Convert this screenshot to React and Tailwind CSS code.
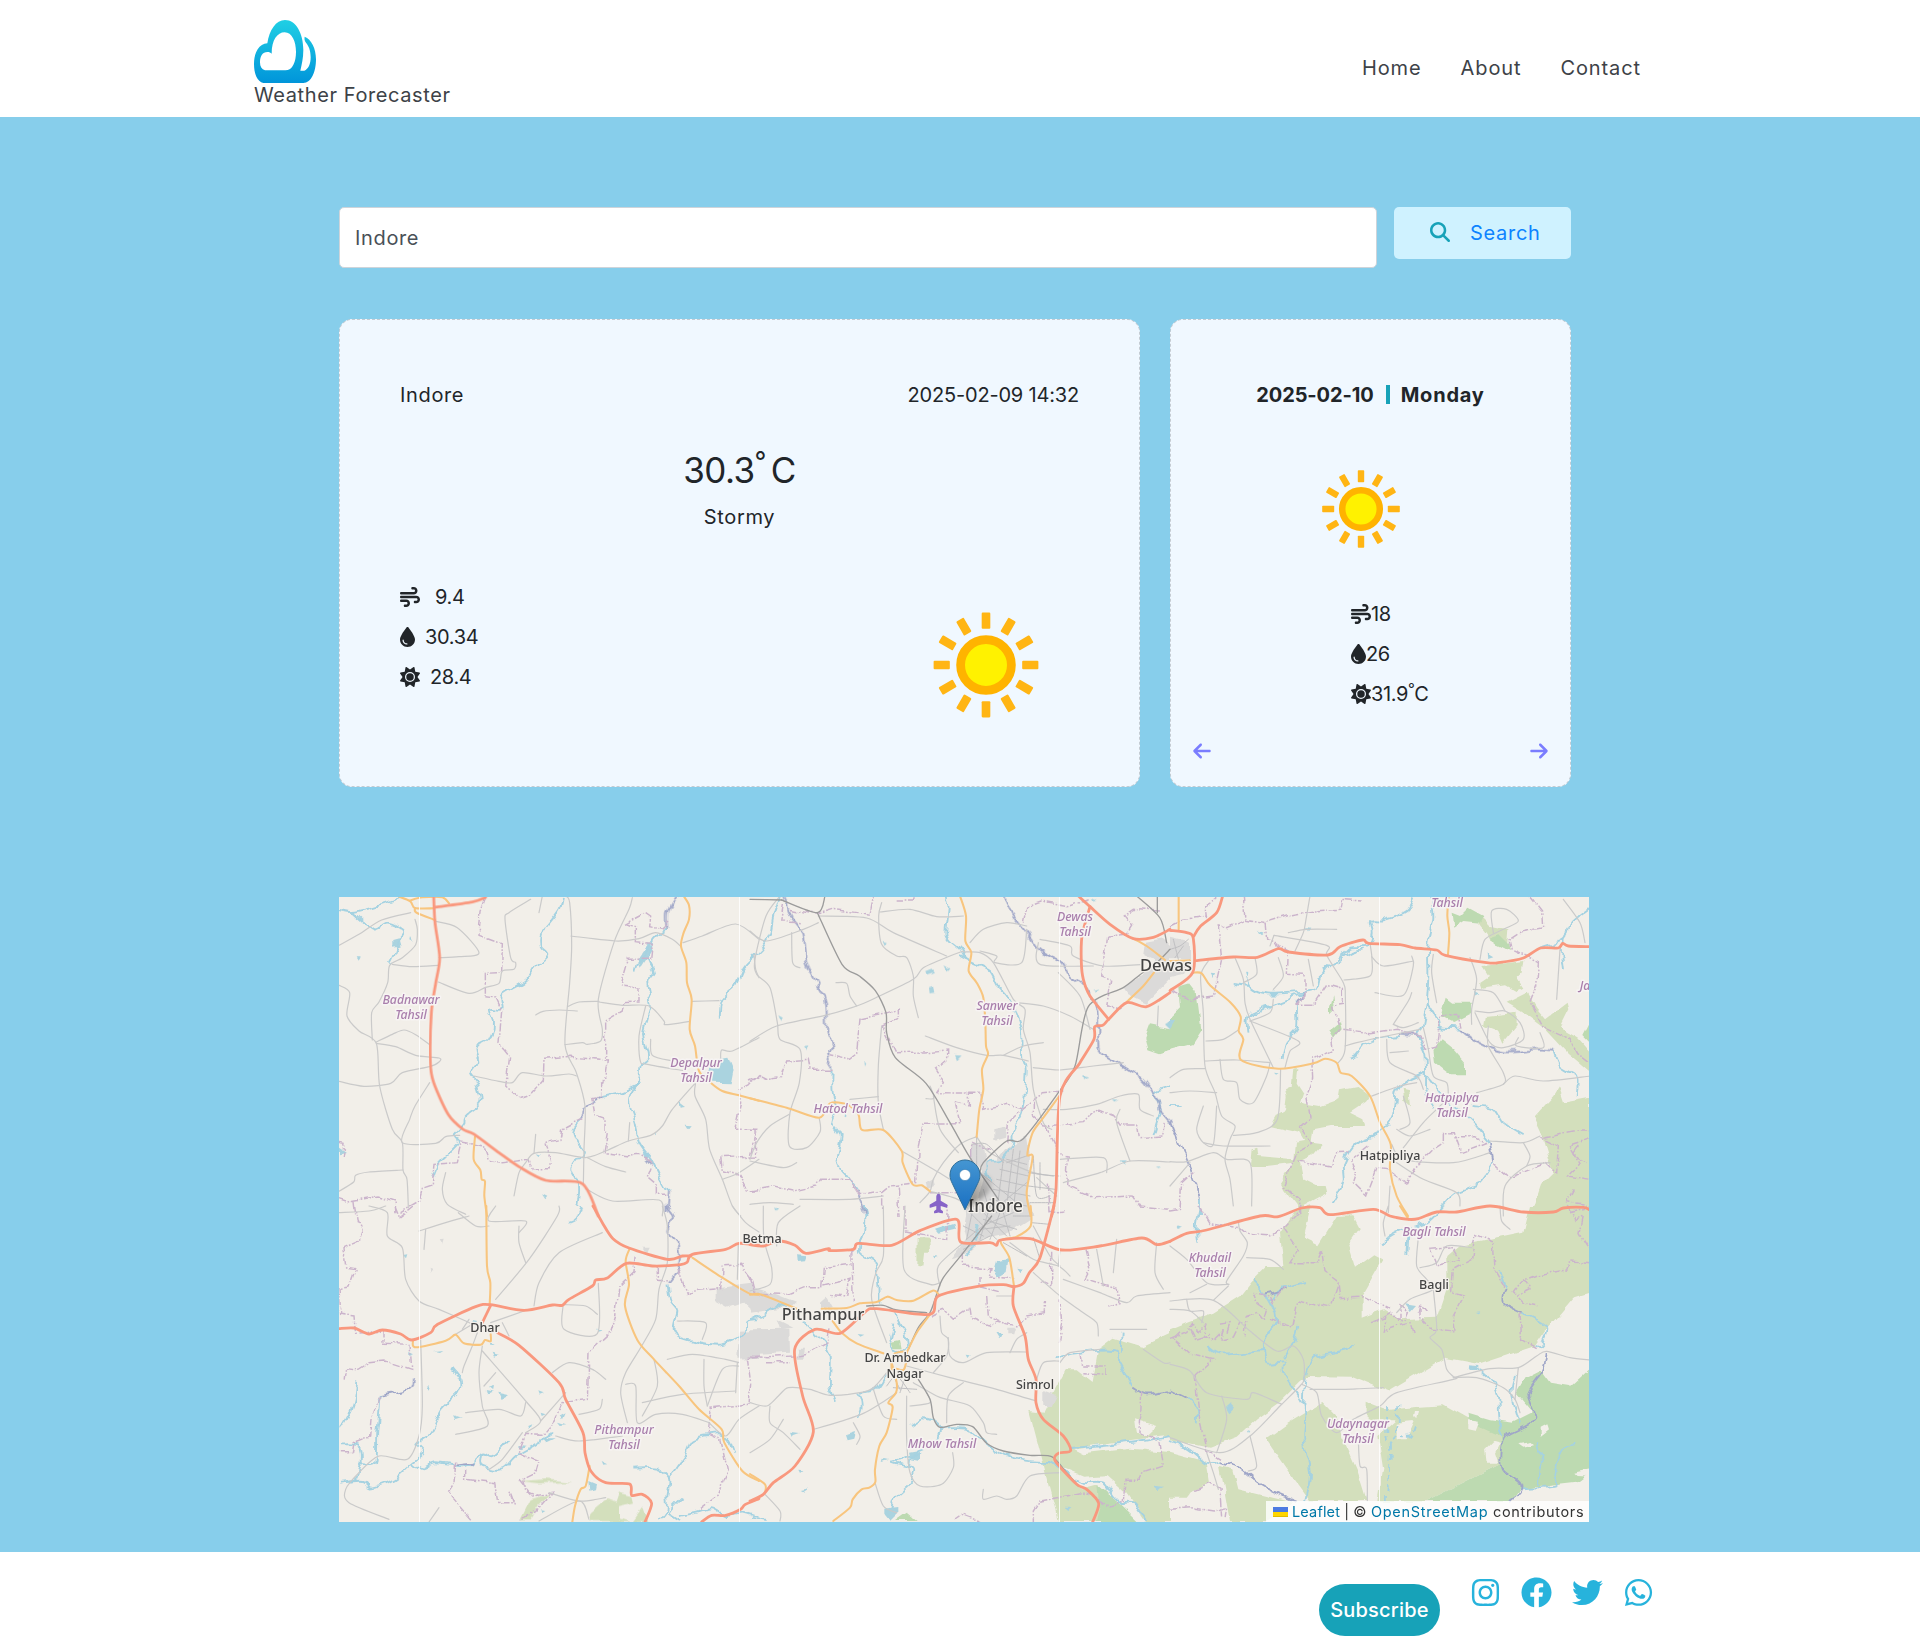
import React from "react";
import { FaInstagram, FaFacebook, FaTwitter, FaWhatsapp, FaPlane } from "react-icons/fa";
import { FaWind, FaDroplet, FaSun, FaMagnifyingGlass, FaArrowLeft, FaArrowRight } from "react-icons/fa6";

/* Map sections: each is drawn on its own 3x grid and placed at (x, y). */
const SECTIONS = [
  {
    x: 0, y: -1,
    red: ["M284 0 288 80 302 185 290 262 277 350 274 500 284 560 328 656 372 700 404 714 480 770 540 812 620 853 730 863 778 960", "M286 34 400 18 440 4"],
    orange: ["M176 0 214 16 228 36 284 37", "M228 36 232 50 288 72", "M212 14 250 4 310 4 330 22", "M1034 0 1050 28 1050 70 1034 110 1026 150 1042 200 1044 260 1058 310 1052 400 1068 450 1080 525 1115 560 1150 585 1200 598 1260 614", "M408 722 404 790 424 822 428 850 438 856 436 900 444 960"],
    road: ["M0 148 60 115 128 72 215 50", "M228 70 235 100 230 146 190 185 152 208 146 260 120 318 98 350 100 432", "M160 205 220 212 298 208", "M0 268 32 290 24 360 60 405 112 442 122 570 160 700 190 740 192 822 204 850 208 935", "M112 438 160 415 195 402 230 416 272 446", "M112 442 170 452 230 478 300 486 300 498 272 512 190 530 155 562 75 571 0 556", "M272 560 228 630 212 670 190 740 290 742 320 722 362 718", "M0 886 44 858 50 838 90 828 192 822", "M300 185 360 182 420 170 355 95 290 76", "M680 0 692 20 698 150 692 260 678 446 712 530 738 630 735 760 733 865", "M678 446 730 440 745 445 785 435 790 400 778 310 826 136 870 40 880 5", "M696 120 830 135 900 128 950 110 1000 130 1026 152", "M590 357 612 346 660 342 715 345", "M686 332 720 318 780 316", "M780 318 850 328 930 330 975 375 980 386 1052 376", "M1032 140 1090 120 1190 84 1260 130", "M1060 316 1140 314", "M298 258 390 292 440 274 480 262 490 225 525 220 530 200 515 185 498 70 510 50 575 10", "M404 540 480 556 520 560 550 530 620 540 690 534 712 540", "M1260 425 1180 465 1148 462 1145 490", "M1070 560 1068 600 1100 670 1112 760 1150 850 1180 930 1205 960", "M1068 562 1000 640 970 690 935 718 868 735 800 765 740 785 650 770 585 772 560 800 540 830 525 900", "M745 785 800 812 860 828", "M740 878 820 915 960 912 970 960", "M920 330 900 420 904 495 925 505 1040 525", "M935 430 940 478 1000 495", "M1150 850 1200 830 1260 790", "M868 735 872 680", "M585 772 590 715", "M1245 175 1250 220 1260 245", "M320 830 310 880 325 925 380 955", "M600 50 610 0"],
    river: ["M0 42 40 48 100 35 170 12 190 0", "M40 48 105 100 145 80 198 110 180 140 165 180 155 200", "M672 0 660 42 610 110 605 150 625 175 590 210 560 255 490 300 490 340 450 340 462 380 450 430 410 455 418 495 395 530 412 560 424 620 380 660 375 690 350 720 355 745 300 800 282 840", "M985 95 945 130 930 190 945 228 925 260 935 330 915 410 930 480 905 510 900 550 870 610 890 680 900 740 935 790 960 840 990 890", "M905 560 850 585 790 600", "M730 665 700 700 715 740 735 770 700 820 720 870 715 930", "M945 130 900 190 885 230", "M1250 180 1215 215 1190 270 1150 310 1142 365"],
    dusk: ["M1012 0 985 50 985 95", "M790 600 740 630 730 665", "M990 890 985 945", "M925 790 940 810"],
    admin: ["M440 0 426 40 420 115 490 140 488 230 436 232 436 302 470 306 488 345 480 440 512 480 500 570 540 606 570 596 610 550 612 490 700 484 808 492 800 550 785 560 785 600 755 605 765 660 795 670 795 705 808 710 798 770 870 780 905 778 940 805 925 845 955 870 955 895 985 895", "M855 85 920 50 935 60 932 92 965 100 990 75", "M860 85 892 92 892 140 940 145 935 190 868 190 845 270 900 276 900 318 855 320 850 345 800 375 800 490", "M730 665 665 700 660 730 620 740 635 800 630 818 580 818 570 790 490 800 445 792 430 750 370 738 355 800 285 805 280 870 250 880 240 915 180 950", "M0 905 30 915 120 900 165 915 168 955", "M1260 535 1230 570 1200 585 1205 620 1188 700 1248 700 1250 780 1145 785 1150 820 1200 835 1225 885 1260 885", "M45 915 50 955", "M0 742 15 745 10 780"],
    water: ["M1120 490 1165 482 1180 520 1172 562 1120 560 1105 530Z", "M163 135 182 130 188 152 163 155Z", "M895 190 930 140 940 160 905 215Z", "M1018 615 1038 630 1022 632Z", "M1040 686 1058 688 1048 700Z", "M612 895 628 902 622 910Z", "M350 728 362 730 355 745Z", "M50 184 62 184 56 194Z", "M210 120 218 135 208 130Z", "M945 706 955 712 946 718Z", "M0 755 18 768 0 772Z", "M590 778 606 782 598 786Z"],
  },
  {
    x: 411, y: -1,
    red: ["M985 0 1020 32 1080 85 1150 128 1210 124 1260 100", "M1020 32 996 120 994 200 1000 250 1020 300 1076 370", "M1260 290 1190 332 1130 320 1076 370 1058 388 1034 392 1032 430 990 500 930 600 918 880 905 960"],
    orange: ["M630 0 648 60 646 135 664 170 656 225 680 260 700 305 706 380 708 450 714 475 696 520 700 580 688 640 680 722", "M0 607 110 635 208 665 240 622 290 625 325 655 336 702 400 702 455 765 458 800 488 865 515 868 540 886", "M928 600 880 665 848 710 832 776 848 782 830 890 842 960", "M1150 128 1190 150 1245 192", "M1130 318 1180 270 1212 230"],
    rail: ["M0 10 95 12", "M95 12 202 50 225 0", "M202 50 276 205 328 240 376 284 408 350 410 410 436 485 528 562 600 680 660 785 745 910", "M1260 160 1220 200 1170 236 1120 275 1015 332 975 510 925 590 820 728 770 735 700 800 690 830", "M1160 0 1230 66 1250 140", "M1222 0 1222 50"],
    road: ["M205 60 350 66 430 110 590 180", "M0 105 50 135 160 100 205 80", "M90 0 48 60 15 190 20 235 60 275 82 380 90 430 150 460 148 560 120 650 118 750 170 755 210 708 208 668", "M0 436 80 390 225 358 320 330 376 306 490 250 520 215 600 180 640 165", "M395 20 386 60 395 145 440 180 470 185 490 240 490 300 505 365", "M390 48 480 40 560 62 640 60", "M660 140 700 100 770 80 830 90", "M640 168 690 170 730 200 790 310 825 340 820 400 840 470 850 580 880 680 905 700", "M526 420 620 455 710 478 760 478 835 495", "M760 478 820 450 880 440", "M850 515 930 522 1030 510 1120 500", "M880 640 950 640 1040 625 1110 600 1165 595 1170 640 1210 660", "M680 722 630 745 580 800 550 850 540 886 510 920", "M680 722 720 770 850 830 930 840", "M395 390 385 510 385 620 400 700", "M300 610 385 602", "M865 140 870 205 1030 210", "M870 130 960 150 970 180 1060 210 1180 205", "M550 600 570 700 625 770", "M455 765 550 820 600 850", "M0 795 100 815 140 800", "M0 925 60 920 130 925", "M150 910 300 910 400 900", "M940 860 1050 830 1140 795 1260 798", "M800 320 880 330 960 360 1030 400", "M528 608 552 606 540 570", "M258 260 290 262 300 300 320 330", "M125 110 128 200 150 215", "M690 165 740 180 735 200 815 200 830 100", "M118 655 60 690 20 740 0 790", "M1225 330 1222 390", "M925 230 990 300 1020 400", "M540 886 610 905 650 925", "M1140 795 1100 680 1110 640", "M930 790 1060 785 1070 830", "M860 845 920 900"],
    street: ["M740 850 830 870", "M750 820 835 840", "M770 790 830 805", "M790 760 770 930", "M810 765 790 940", "M760 790 740 950", "M730 880 840 900", "M720 910 830 930", "M700 880 720 950", "M770 800 830 780", "M690 830 800 920", "M745 930 830 860", "M665 745 710 745 760 800", "M680 725 680 830", "M835 830 910 840", "M835 870 915 880", "M850 780 860 900 900 900", "M870 800 870 880", "M840 920 910 920"],
    river: ["M590 0 596 40 590 120 630 160 650 190 720 225 745 270 770 300 800 350 815 400 820 480 830 520 818 640 790 700 785 750 755 790 710 800 720 860", "M90 0 70 60 60 110 30 160 0 190", "M245 520 245 590 262 640 250 680 272 720 260 800 290 840 320 880", "M345 940 350 960", "M1260 570 1210 590 1230 640 1210 720", "M650 190 630 180", "M265 640 285 665"],
    dusk: ["M100 0 120 60 155 110 170 200 205 270 228 320 232 400 250 450 230 490 245 520", "M760 0 790 60 830 110 870 165 930 195 960 240 1000 270 1040 340 1045 400 1050 465 1120 510 1180 550 1215 600 1235 650 1260 682", "M320 880 345 950"],
    admin: ["M100 30 92 78 150 80", "M120 40 200 55 250 40 360 55 370 0", "M440 15 490 15 495 0", "M820 80 830 30 870 15 960 30 1020 10", "M435 470 520 468 590 462 590 490 555 520 580 560 560 590 690 592 695 640 770 625 815 635", "M330 365 410 350 445 340 445 370 400 390 405 410 435 470", "M330 365 320 470 300 485 235 470", "M245 520 180 520 175 490 110 495 95 545 50 550 30 540 0 555", "M615 620 630 680 520 682 505 750 500 860 420 870 395 890 395 940", "M615 620 655 630 655 592", "M0 885 70 872 130 885 200 870 215 850 300 850 320 880", "M1070 120 1130 115 1145 90 1120 60 1150 40 1230 45", "M1070 120 1055 240 1085 250 1070 330 1115 335", "M815 640 880 590 940 585", "M850 620 850 660 885 690 1000 680 1040 640 1090 660 1110 690 1160 690 1165 725 1235 720 1240 680", "M890 690 930 775 955 780 950 870 1030 905 1150 900 1170 930 1260 940", "M720 760 665 740 665 800", "M320 880 330 895 390 885", "M770 740 775 680 815 640", "M0 700 20 700 0 780", "M895 860 900 950 940 945", "M445 875 450 960", "M540 890 650 890"],
    urban: ["M1185 140 1240 130 1260 150 1260 250 1190 320 1135 295 1125 280 1180 230 1215 190 1180 175Z", "M740 800 770 760 790 745 830 720 840 780 835 900 850 960 670 960 700 850 690 820 665 800 665 745 700 745 710 790Z", "M730 700 770 690 765 725 730 735Z", "M530 860 550 850 555 870 535 880Z"],
    green: ["M1200 388 1260 400 1260 462 1230 472 1195 460 1186 425Z"],
    water: ["M526 225 545 218 552 228 530 236Z", "M540 275 552 270 556 290 542 292Z", "M580 205 598 215 590 224Z", "M612 480 632 482 618 496Z", "M398 135 410 138 404 150Z", "M162 450 178 448 172 465Z", "M85 355 98 362 94 375Z", "M1030 288 1048 284 1040 292Z", "M1112 790 1130 790 1124 806Z", "M1088 606 1106 608 1096 614Z", "M1000 540 1018 545 1002 552Z", "M1245 385 1260 375 1260 400Z", "M75 932 88 936 80 944Z", "M340 500 346 506 342 514Z", "M1215 812 1232 812 1222 816Z", "M1026 10 1040 16 1030 20Z"],
  },
  {
    x: 831, y: -1,
    red: ["M0 103 50 110 70 128 68 230 0 284", "M72 120 90 92 140 50 158 0", "M78 194 190 183 262 184 325 158 355 168 474 177 510 152 578 132 596 142 690 146 735 156 800 162 826 178 950 200 985 200 1060 186 1112 156 1165 156 1178 142 1195 150 1260 152"],
    orange: ["M26 0 26 100", "M70 230 95 232 120 268 180 318 212 362 206 405 220 430 213 492 325 518 430 502 465 488 500 500 512 530 545 540 600 600 630 680 662 745 660 820 680 900 714 960", "M836 0 832 60 838 110 834 175", "M0 195 60 193"],
    road: ["M115 195 92 240 100 350 105 510 135 590 155 660 195 690 180 730 165 790 180 850 190 930", "M195 185 220 250 225 320 240 370 310 515", "M420 0 408 70 400 110 375 165", "M312 118 470 148 470 178 520 260 526 300 525 460 505 500", "M522 252 600 240 606 190 600 142", "M605 182 640 210 730 195", "M615 290 700 298 730 210 725 180", "M300 150 312 118", "M105 495 200 492 300 500", "M108 435 160 430 205 402", "M240 375 385 435 360 465 345 515", "M332 518 322 670 260 710 190 718", "M0 590 60 585 140 590", "M0 545 40 520 105 518", "M670 385 715 315 725 290", "M760 395 775 460 790 540 830 560 835 600", "M900 185 920 250 905 340 905 385", "M790 175 785 230 800 320", "M930 190 945 130 1000 100 1045 75 1010 40 965 45 970 110", "M915 345 960 350 1005 345 1050 380 1060 430 1000 455 960 440 915 350", "M955 390 955 450 1000 530 1000 565 920 590", "M1000 565 1035 540 1120 555 1260 540", "M1180 10 1230 80 1245 140", "M1170 160 1160 310", "M650 430 660 500 740 540 760 580", "M525 450 560 440 650 420 750 400", "M605 600 690 570 740 560", "M700 755 760 680 800 640 830 610", "M665 745 700 790 850 800 960 770", "M680 800 760 850 860 890 870 930", "M960 735 1060 740 1110 720", "M0 797 50 797 130 770 170 790 240 800 245 930", "M1000 960 1005 870 1070 810 1140 800", "M1070 810 1080 780 1060 740", "M150 490 160 550 200 560 210 610 250 620 290 540 300 500", "M255 185 260 235 220 260", "M415 190 430 270", "M325 185 340 240 310 280", "M100 630 80 700 100 740 130 745 140 630", "M100 740 160 750 300 750", "M355 110 410 100 500 100", "M670 385 700 395 745 380", "M660 470 715 465", "M780 700 720 720 680 700", "M0 870 60 800", "M240 375 300 350 310 310", "M1045 425 1040 450 1120 455 1110 410", "M660 870 655 950", "M910 280 970 290 1005 345", "M700 600 720 680 690 700"],
    river: ["M735 0 710 45 640 72 600 75 605 110 590 150 545 155 520 180 480 205 450 240 440 280 400 290 290 295 240 270 225 230", "M188 264 240 270", "M400 292 330 320 240 355 235 410", "M380 320 380 400 345 440 335 495", "M780 0 790 60 775 150 775 240 770 320 760 380 745 420 765 470 768 530 770 590 790 640", "M770 320 800 370 810 392 870 398", "M690 420 640 425 590 440 560 480 540 488", "M1150 465 1170 510 1220 545 1220 600", "M768 530 700 560 680 590 670 660 630 710 560 740 520 800 520 860 485 925", "M770 540 835 620 900 670 960 740", "M970 800 930 860 860 890 820 930", "M905 630 970 640 1000 680 1055 715", "M1260 35 1210 75 1175 130 1110 155", "M0 630 35 630", "M1175 130 1175 160 1182 220", "M240 350 270 350 300 330", "M500 200 545 170 575 160", "M90 910 90 960"],
    dusk: ["M0 675 30 750 60 810 80 870 90 910", "M870 398 920 435 1000 465 1100 460 1150 465", "M745 420 690 415", "M960 740 970 800", "M380 325 400 290"],
    admin: ["M220 0 225 70 170 95 145 90 155 190 130 300 60 310 0 285", "M225 70 285 80 350 60 430 45 510 40 515 10 575 15", "M285 80 290 130 355 165 352 235 405 238 405 300 380 325 430 325 470 265 520 280 520 325 490 330 510 400 485 430 490 460 425 490 428 550 410 600 420 660 390 690 425 745 380 770 340 870 385 910 390 960", "M520 400 600 410 680 400 750 420 765 460 800 450 810 360 860 355 870 395", "M1080 0 1115 45 1118 95 1045 110 1015 130 1020 160 1105 200 1100 270 1080 320 1120 395 1200 430 1220 470 1260 500", "M385 795 480 810 500 770 540 768", "M595 750 545 790 560 830 550 860 590 900 620 820 660 825 710 860 730 820 790 760 820 740 820 710 850 710 870 770 950 740 920 725 850 725", "M970 800 1020 845 1130 800 1160 830 1165 750 1115 725 1210 705 1260 705", "M0 945 30 940 35 860 70 830", "M110 70 105 30 140 10 140 0", "M0 90 40 70 110 60", "M1260 730 1200 750 1230 800 1190 840 1260 850", "M1210 880 1190 920 1260 930", "M1225 750 1210 770 1250 800"],
    park: ["M370 520 385 520 380 560 400 590 390 620 450 630 505 610 510 580 560 570 600 600 585 620 540 650 580 670 585 690 540 690 480 690 430 700 425 740 460 745 430 780 390 800 400 850 440 870 470 870 475 890 400 930 390 960 380 930 340 880 330 860 370 800 290 810 240 810 245 760 262 755 265 780 370 790 375 740 405 735 390 710 300 690 320 655 345 640 350 600 345 580 365 570Z", "M940 210 1060 195 1055 230 1040 245 1060 275 1040 285 1005 265 935 275 930 260 960 240Z", "M1010 320 1070 290 1100 340 1125 370 1190 320 1195 340 1170 390 1190 410 1225 430 1260 470 1260 530 1190 470 1120 395 1060 350Z", "M950 360 1040 350 1040 390 1000 440 985 405 945 390Z", "M1165 575 1180 620 1260 605 1260 960 1080 960 1110 870 1150 830 1120 730 1090 665 1150 600Z", "M695 575 715 580 720 628 700 610Z", "M930 60 960 90 1015 100 1010 160 960 130 925 85Z"],
    green: ["M25 275 60 265 80 290 94 400 65 445 0 462 0 370 30 340Z", "M830 305 850 320 905 320 905 350 850 378 815 360Z", "M812 430 850 460 885 500 885 535 840 535 795 500 790 460Z", "M845 50 870 60 895 35 940 60 930 80 880 75 850 95Z", "M480 330 490 295 495 340 480 355Z", "M475 405 510 375 515 400 490 430Z", "M1260 380 1240 420 1260 440Z", "M955 125 985 115 1015 145 1020 165 980 145Z"],
    urban: ["M0 125 60 140 60 190 0 190Z", "M0 195 50 200 40 230 0 240Z"],
    street: ["M0 160 30 150 55 130", "M15 185 40 150", "M10 130 25 190"],
    water: ["M260 104 284 110 276 118Z", "M122 230 136 232 130 246Z", "M950 172 970 184 952 190Z", "M912 282 928 290 914 298Z", "M405 96 418 98 412 108Z", "M312 530 326 532 318 536Z", "M0 370 15 375 0 400Z"],
  },
  {
    x: 0, y: 309,
    red: ["M0 368 45 366 90 384 130 372 185 384 218 402 275 380 296 355 410 302 455 296 555 313 640 297 670 298 690 280 760 240 770 222 805 216 862 172 940 180 1025 176 1045 168 1060 145 1160 130 1200 112 1260 118", "M762 0 790 50 822 98 870 126 985 160 1030 150 1055 150", "M455 298 430 350", "M475 380 540 418 660 530 680 580 732 680 738 740 756 796 800 830 872 834 878 868 910 865 938 892 918 948", "M1088 948 1118 928 1160 928 1205 910 1218 896 1260 878"],
    orange: ["M442 0 444 180 454 230 452 296", "M222 402 230 424 320 404 350 386 375 412 425 416 438 402 455 406 455 385", "M872 128 860 165 870 235 858 300 895 402 945 460 1020 540 1080 610 1148 670 1156 710 1210 795 1260 825", "M1060 155 1150 215 1230 262 1260 266", "M752 780 740 840 725 850 708 900 700 948"],
    road: ["M90 0 145 20 145 90 190 125 200 220 240 285 300 310 380 345 400 355", "M470 0 450 45 560 45 540 80", "M358 20 410 60 450 60", "M240 75 320 50 390 30", "M660 0 655 30 570 160 470 280", "M790 80 660 140 600 230 585 300", "M540 60 540 110 560 170", "M455 350 555 315", "M672 300 675 370 775 383 778 232", "M675 296 740 300 775 325", "M415 380 400 420 375 480 370 500", "M430 420 420 500 430 600 445 660 350 685", "M430 435 560 585 605 645 560 680", "M380 620 480 610 545 630 560 590", "M435 540 470 500", "M970 0 985 60 985 170 960 250 950 340 908 420 860 500 845 560 865 650", "M860 535 890 540 895 650 950 625 1030 625 1110 650", "M985 460 1060 445 1160 460 1200 470", "M945 460 955 540 910 630", "M910 590 1030 565 1190 555", "M1095 460 1095 540 1105 600", "M1110 650 1160 690 1200 640 1260 600", "M1195 470 1190 560", "M650 690 720 705 850 690", "M245 402 250 600 240 690 205 760 120 750 60 800 20 850 30 890 150 940", "M640 500 690 470 760 490 800 520", "M720 625 780 610 790 580", "M605 645 680 560", "M630 860 720 885 800 875", "M600 945 720 885 750 940", "M300 905 270 948", "M1180 0 1220 50 1260 78", "M1198 115 1195 220", "M490 350 510 390", "M350 385 400 355", "M255 130 260 70", "M0 20 90 15 140 0", "M1015 345 1100 350 1090 400", "M1105 600 1150 490 1200 480", "M450 790 490 760 550 680", "M370 370 390 340"],
    river: ["M725 0 710 40 690 50", "M0 830 50 820 65 770 110 770 115 680 125 570", "M55 520 45 590 20 650 0 665", "M0 715 60 720 65 770", "M340 485 365 520 360 560 310 610 275 680 235 710 255 740 220 770 165 820 100 845 70 825 20 828", "M220 770 250 790 290 772 380 780 430 740 460 750 505 705", "M430 740 430 780 490 790 530 750 600 710 645 680", "M985 230 995 290 1015 320 1005 380 1060 405 1150 415 1220 380 1225 345 1260 340", "M880 785 950 785 990 815 985 870 985 910 960 945", "M990 815 1040 750 1060 700 1140 685 1165 700 1180 740", "M1030 875 990 920 1020 945", "M1020 930 1080 920 1120 910 1160 930 1210 920 1260 935"],
    dusk: ["M985 0 1005 30 985 75 1020 120 1020 180 990 225", "M125 570 210 550 222 515", "M350 775 400 770"],
    admin: ["M50 0 58 50 70 75 60 105 15 125 20 180 50 185 30 240 0 245 5 325 45 330 50 385 135 378 135 412 210 415 215 490 140 465 90 470 60 490 20 485 15 525", "M165 0 180 35 225 0", "M125 570 100 630 95 690 45 710 40 740 0 740", "M885 155 882 200 840 240 830 330 815 380 750 440 745 580 670 590 650 640 610 688 560 685 540 740 600 765 590 800 550 820 560 855 600 870", "M955 180 955 220 990 222", "M1020 185 1045 265 1070 250 1145 245 1150 180 1205 175 1240 220 1250 262", "M350 770 345 830 325 860 360 900 400 945", "M380 790 380 820 470 830 480 890 520 890 510 860 525 900", "M1260 450 1225 455 1235 530 1230 595 1120 605 1110 685 1145 700 1165 790 1135 870 1080 912", "M540 820 580 870 640 862 590 920 545 940"],
    urban: ["M1130 245 1180 238 1240 230 1260 265 1260 320 1230 310 1210 290 1165 305 1130 285Z", "M1200 380 1260 378 1260 455 1195 458Z", "M910 122 932 122 925 138 910 132Z", "M305 100 320 98 315 115Z", "M275 185 286 190 278 200Z"],
    park: ["M755 920 790 890 805 880 830 890 840 860 880 870 885 890 840 900 840 935 870 945 750 945Z", "M880 945 910 905 925 945Z", "M545 940 575 880 635 862 600 900 575 940Z", "M540 825 620 820 700 828 600 832Z"],
    water: ["M745 825 768 835 765 850 748 854Z", "M475 560 510 568 485 582Z", "M450 545 465 540 462 555Z", "M195 150 208 148 204 160Z", "M208 438 222 445 208 450Z", "M455 440 480 448 462 455Z", "M598 556 614 562 602 566Z", "M615 700 650 700 625 712Z", "M440 555 465 560 445 565Z", "M605 620 620 625 608 630Z", "M785 765 805 775 790 776Z", "M665 630 680 622 672 640Z", "M345 628 372 636 352 642Z", "M568 660 580 655 572 672Z", "M285 435 310 432 300 438Z", "M455 410 470 412 458 418Z", "M778 368 790 370 782 378Z", "M400 342 415 345 404 354Z", "M610 910 622 912 612 918Z", "M260 540 270 535 266 548Z", "M660 650 685 658 668 660Z", "M540 720 560 722 548 730Z"],
  },
  {
    x: 411, y: 309,
    red: ["M0 116 40 120 85 105 135 118 168 142 235 128 240 134 310 130 325 112 425 118 510 74 620 40 632 108 720 110 740 118 752 102 840 98 935 132 1050 120 1175 96 1220 116 1260 106", "M912 0 870 155 838 200 820 232 792 242 760 236 690 240 565 270 540 325 380 308 345 318 270 382 195 370 134 430 158 570 190 678 135 780 70 830 40 865 0 885", "M792 242 790 300 825 390 835 460 858 520 858 590 880 640 940 690 962 734 925 742 916 765 980 835 1010 850 1046 892 1028 948"],
    orange: ["M0 266 35 266 140 308", "M215 308 290 306 330 292 380 288 412 272 440 282 490 284 548 254 565 264", "M248 345 275 380 320 412 400 442", "M470 440 500 380 540 325", "M425 470 440 530 438 560 415 590 428 604 410 680 388 720 375 790 376 828 358 845 335 850 308 880 300 905 250 945", "M842 0 842 60 800 92 752 105 778 155 792 240", "M0 804 45 835 45 860", "M425 490 425 465 435 442 470 440 462 490 440 488"],
    rail: ["M725 30 640 140 580 215 560 265 540 320 505 365 475 430", "M530 320 440 312 400 298 350 300", "M505 520 540 580 550 635 570 664 620 655 668 662 710 712 760 735 840 748 905 752 950 800 985 840"],
    road: ["M40 0 42 100 65 185 60 235 0 255", "M465 0 462 190 540 235 570 230", "M80 120 85 50 150 0", "M400 0 400 150 378 200 365 280 410 410", "M470 480 600 515 740 550 858 585", "M595 395 600 450 640 470 710 440 830 438", "M570 330 575 380 595 400 590 450 550 500", "M0 590 50 600 85 570 115 545 180 550 240 568 330 560 370 545 410 500", "M190 670 260 650 340 622 395 590 440 560", "M470 570 470 700 480 800 510 840 575 835 610 785 608 740", "M490 530 560 570 590 580 660 600 700 650 710 680 740 685", "M590 650 595 570 640 530", "M930 800 840 810 800 870 770 880 740 870 700 880 700 850", "M45 865 90 915 90 945", "M375 830 400 900 440 920", "M60 600 60 650 100 680 150 730", "M860 520 880 470 930 465", "M780 440 800 400 830 380", "M850 200 930 270 1000 320 1040 350 1045 390", "M940 220 1050 260 1130 290 1160 270 1260 260", "M1100 100 1090 200", "M1080 370 1190 370", "M930 470 960 440 1050 430", "M1180 430 1240 470 1260 470", "M1220 110 1215 200 1240 250", "M850 60 900 150 930 180", "M780 110 850 160 925 180 960 210", "M925 180 930 130", "M0 740 60 700 100 640", "M320 715 330 690 310 650", "M480 600 540 590 530 560", "M570 240 565 180 640 110", "M740 270 790 270", "M1040 130 1060 240", "M370 550 400 630 440 640"],
    street: ["M660 20 740 100", "M690 10 770 90", "M720 0 690 100", "M750 20 720 100", "M670 0 650 100", "M700 40 800 70", "M690 70 780 60", "M640 60 700 90", "M760 20 780 90", "M650 100 700 60 790 20", "M640 130 720 90", "M845 50 900 55", "M850 95 870 160", "M790 30 840 30", "M760 110 830 150", "M425 500 450 550", "M470 500 450 560", "M410 540 440 510 480 560", "M430 545 500 550"],
    river: ["M345 0 345 60 330 140 375 170 385 240 385 290", "M435 320 450 360 465 380 470 430 440 440 420 400 430 350", "M165 350 190 380 240 440 240 540 255 590", "M480 660 520 640 560 650 570 670 560 700 530 720 490 740 480 790", "M325 560 335 600 320 640", "M330 560 380 550 410 500", "M570 665 640 665 680 690 740 735 820 760 900 765", "M920 455 970 440 1090 432 1110 470 1150 540", "M960 730 1060 720 1180 705 1260 690", "M900 765 990 825 1060 830 1100 885 1150 890 1190 945", "M510 740 460 760 430 770 490 790 480 830 440 870 430 900", "M0 340 40 325 80 300 130 310", "M1118 380 1115 440", "M680 110 650 150", "M0 935 50 945"],
    dusk: ["M1150 545 1190 565 1260 555"],
    admin: ["M0 210 15 262 110 265 160 245 215 245 220 185 300 175 300 140 325 110", "M220 240 300 220 290 270 240 265", "M465 75 590 100 595 0", "M640 140 640 180 720 185 715 210 800 215", "M690 210 690 245 750 260", "M540 330 580 310 610 340 660 305 665 340 715 360 740 345 800 360 830 330 880 320 880 290", "M0 450 45 455 130 450 180 440 230 410 240 370", "M905 140 905 240 870 225", "M1005 130 1020 190 1005 220 1105 250 1110 290 1075 300", "M930 280 935 350 925 410", "M990 445 995 480 1065 480 1065 505 1000 500", "M1175 560 1170 680 1230 710 1240 780 1180 800 1170 820 1125 820 1120 890 1080 900 1030 870 1000 860 870 885 850 915 850 945", "M610 945 640 925 690 945", "M305 130 310 290", "M710 270 715 330 750 345", "M465 0 465 75", "M45 470 120 470"],
    park: ["M838 615 880 620 895 590 950 490 980 490 1028 528 1045 430 1090 395 1180 422 1260 385 1260 948 925 948Z", "M503 93 538 95 540 140 525 140 520 182 502 180Z"],
    land: ["M968 728 1070 712 1160 700 1260 690 1260 738 1140 728 1000 745Z", "M935 785 1000 812 1070 808 1130 860 1190 948 1165 948 1105 890 1045 838 1000 850Z", "M1155 640 1190 650 1222 660 1190 690 1160 680Z"],
    green: ["M1045 838 1105 890 1165 930 1160 948 1038 948 1050 895Z", "M435 945 470 920 500 945Z", "M425 410 450 405 455 430 430 430Z"],
    urban: ["M0 370 118 368 120 440 0 448Z", "M0 240 60 260 135 290 120 305 0 320Z", "M650 0 840 0 840 40 770 85 700 100 640 150 605 160 650 100 640 60Z", "M880 555 920 570 905 600 880 600Z", "M210 290 230 272 245 300 210 308Z", "M80 340 130 365 90 370Z", "M145 425 165 425 160 455 140 455Z", "M775 365 795 365 790 385 775 385Z"],
    water: ["M735 165 775 160 770 195 745 210 728 190Z", "M555 68 610 50 615 68 565 80Z", "M138 145 170 148 165 163 140 165Z", "M400 905 445 900 445 920 420 945 400 920Z", "M285 685 315 675 310 695 290 700Z", "M120 680 150 684 125 692Z", "M733 380 755 385 745 400Z", "M805 182 822 185 815 196Z", "M650 440 662 442 655 450Z", "M395 758 412 762 392 768Z", "M155 855 180 850 165 860Z", "M480 740 510 735 510 765 485 760Z", "M1212 842 1245 845 1225 855Z", "M943 905 965 905 955 915Z", "M145 788 160 790 150 798Z", "M552 152 568 155 556 160Z", "M320 384 340 386 328 392Z", "M680 60 690 60 680 105 670 100Z"],
  },
  {
    x: 831, y: 309,
    red: ["M0 106 50 82 110 72 270 30 325 32 395 6 450 5 480 26 610 10 660 30 715 40 745 38 800 18 860 18 960 0 1060 18 1150 18 1180 6 1240 4 1260 12"],
    orange: ["M690 0 716 40"],
    road: ["M0 120 50 160 110 230 175 235 170 225 220 150 232 110 210 75 205 45", "M0 285 130 283 240 375 320 435 370 420 400 460 402 520 390 540 330 600 240 690 150 740 0 695", "M230 155 300 160 340 190", "M0 475 60 495 110 560 230 580 250 560 335 595", "M395 535 440 560 455 630 500 680 550 640 630 600 680 560 850 520 850 512 830 490 815 430 780 395 800 370 790 250", "M420 550 520 550 640 545", "M850 515 960 488 1045 485 1100 450 1130 436 1200 455 1260 462", "M745 95 740 180 770 220 790 250 720 280 680 320", "M905 125 830 120 800 170 750 185", "M850 515 920 515 1000 545 1035 580 1050 620", "M155 570 170 640 140 740", "M110 740 130 800 145 850", "M240 690 260 780 235 795", "M565 700 570 780 590 790 592 885", "M990 0 995 45 1020 70", "M1045 485 1035 580", "M0 310 60 315 100 350", "M50 280 60 315 100 315 95 350", "M60 260 110 235", "M130 283 175 240", "M655 0 640 50 645 90"],
    river: ["M90 0 80 60 85 110", "M245 220 290 270 318 340 280 405 290 470 340 470 340 500 400 600 400 700 420 800 405 885", "M300 285 330 250 405 225", "M110 418 150 445 280 435", "M550 415 530 435 440 455 410 500 400 600", "M385 360 370 410 340 460", "M820 0 770 50 680 80 630 112", "M715 80 712 150", "M1060 320 1130 360 1120 410 1100 425", "M900 485 940 500 980 550 990 660 1000 690", "M1035 510 1025 560 1050 655", "M990 190 1010 250", "M0 705 60 730 110 770 150 765", "M50 575 80 610 80 650", "M1050 850 1160 840 1150 800 1180 730 1210 715", "M1095 715 1115 760 1105 840"],
    stream: ["M648 600 650 700 660 730 650 885", "M685 600 680 680 660 720", "M735 655 720 690 690 690"],
    dusk: ["M0 550 50 575", "M150 765 200 780 270 835 330 865 380 885", "M1010 250 1005 290 1060 320", "M1130 436 1120 490 1075 560 1095 640 1010 690 995 740 1000 790 1050 830 1050 860 1020 885", "M290 265 350 250"],
    admin: ["M90 0 120 50 205 65 230 85 310 90 340 65 385 20 390 0", "M340 65 385 130 360 170 440 170 455 135 465 200 505 230 480 305 380 285 365 360 300 340", "M505 235 510 275 575 270 660 310", "M780 130 850 125 870 160 800 180Z", "M905 160 915 85 970 110 975 190 1010 250", "M905 160 850 190 845 260 880 270 850 330 855 375 790 370 750 330 750 300", "M1260 170 1200 165 1190 195 1100 210 1050 230 1030 260 1060 290 1105 300", "M1060 220 1080 250 1040 270", "M1050 320 1055 400 1100 425", "M75 510 90 650 110 735 150 760", "M75 510 130 460 60 445 10 400 30 380", "M0 400 50 380 70 350 80 380 110 360 100 390 130 400 160 370 150 400 190 390 210 350 230 350 225 390", "M60 370 75 400 120 385", "M150 355 180 350 170 380", "M230 330 260 320 280 345 290 310 260 290 250 260 300 270 310 290 350 240", "M600 350 650 335 640 375 720 350 730 380", "M610 350 660 320 700 350", "M690 345 690 300 715 320 705 345", "M745 320 750 295 770 320", "M75 850 120 830 150 850 155 940", "M0 910 60 905 130 915 170 905 165 940", "M1195 0 1215 40 1240 30 1230 80 1260 130", "M1200 20 1245 10"],
    park: ["M330 85 370 20 425 0 400 95 445 118 500 30 550 28 570 65 535 115 555 185 610 145 638 160 575 270 575 335 640 310 690 340 800 335 835 230 835 150 870 120 1060 80 1080 0 1260 0 1260 260 1210 275 1130 370 1095 420 930 475 825 455 655 558 545 512 415 510 390 530 330 590 260 640 200 695 120 725 0 700 0 370 60 345 130 320 210 270 245 225 290 180 340 180Z", "M0 740 110 770 120 830 70 850 50 875 0 875Z", "M150 780 190 790 205 850 370 890 290 948 180 948Z", "M288 700 350 655 460 588 500 630 520 700 560 790 590 885 420 885 350 790Z", "M590 590 640 610 740 600 820 595 900 640 990 690 990 775 770 885 625 885 640 790 625 690 680 640 590 640Z"],
    green: ["M770 885 990 775 990 690 900 650 895 620 960 640 1030 650 1090 620 1040 560 1070 510 1110 490 1140 530 1200 540 1260 485 1260 800 1220 830 1050 850 1025 885Z"],
    land: ["M945 730 970 705 990 710 975 740 985 770 950 770Z", "M1115 665 1135 655 1140 670 1115 690Z", "M1045 712 1085 705 1095 715 1060 722Z", "M895 645 930 650 920 675 895 670Z", "M680 650 735 645 710 700 680 700Z", "M738 615 750 615 745 640 735 630Z", "M1210 800 1260 790 1260 812 1220 810Z"],
    water: ["M165 605 180 592 192 605 175 622Z", "M705 295 738 300 722 318Z", "M895 478 925 480 925 495 900 495Z", "M918 318 934 316 926 322Z", "M22 58 36 62 26 66Z", "M236 670 244 672 240 678Z"],
  },
];

const FILLS = [
  ["park", "#d3dfbc"],
  ["green", "#bddab1"],
  ["land", "#f2efe9"],
  ["urban", "#dbdad9"],
  ["water", "#aad3df"],
];

const LINES = [
  ["river", "#a5d2e1", 5.6],
  ["stream", "#a5d2e1", 5.6, "18 12"],
  ["dusk", "#9fa6c8", 5.4],
];

const ROADS = [
  ["road", "#cacaca", 3.6],
  ["street", "#bfbfc1", 3],
  ["rail", "#9b9b9b", 4],
  ["orange", "#f8c57e", 6.2],
  ["red", "#f9987e", 8.4],
];

/* Turns a list of points into a soft curve that passes through all of them. */
function curve(d) {
  const n = (d.match(/-?\d+/g) || []).map(Number);
  const p = [];
  for (let i = 0; i < n.length; i += 2) p.push([n[i], n[i + 1]]);
  let out = `M${p[0][0]} ${p[0][1]}`;
  const k = 7;
  for (let i = 0; i < p.length - 1; i++) {
    const a = p[i - 1] || p[i];
    const b = p[i];
    const c = p[i + 1];
    const e = p[i + 2] || c;
    out += `C${b[0] + (c[0] - a[0]) / k} ${b[1] + (c[1] - a[1]) / k} ${c[0] - (e[0] - b[0]) / k} ${c[1] - (e[1] - b[1]) / k} ${c[0]} ${c[1]}`;
  }
  return out;
}

function Layer({ name, smooth, ...props }) {
  return (
    <g {...props}>
      {SECTIONS.map((s, i) => (
        <g key={i} transform={`translate(${s.x} ${s.y}) scale(0.33333)`}>
          {(s[name] || []).map((d, j) => (
            <path key={j} d={smooth ? curve(d) : d} />
          ))}
        </g>
      ))}
    </g>
  );
}

const DISTRICTS = [
  [72, 107, "Badnawar", "Tahsil"],
  [357, 170, "Depalpur", "Tahsil"],
  [509, 216, "Hatod Tahsil"],
  [658, 113, "Sanwer", "Tahsil"],
  [736, 24, "Dewas", "Tahsil"],
  [1108, 10, "Tahsil"],
  [1246, 93, "Ja"],
  [1113, 205, "Hatpiplya", "Tahsil"],
  [285, 537, "Pithampur", "Tahsil"],
  [603, 551, "Mhow Tahsil"],
  [871, 365, "Khudail", "Tahsil"],
  [1095, 339, "Bagli Tahsil"],
  [1019, 531, "Udaynagar", "Tahsil"],
];

const TOWNS = [
  [1051, 263, "Hatpipliya", 12.5],
  [423, 346, "Betma", 12.5],
  [146, 435, "Dhar", 12.5],
  [566, 465, "Dr. Ambedkar", 12.5],
  [566, 481, "Nagar", 12.5],
  [696, 492, "Simrol", 12.5],
  [1095, 392, "Bagli", 12.5],
  [827, 74, "Dewas", 16.5],
  [656.5, 315, "Indore", 17.2],
  [484, 423, "Pithampur", 16.3],
];

function MapView() {
  return (
    <div className="relative h-[625px] w-[1250px] overflow-hidden bg-[#f2efe9]">
      <svg viewBox="0 0 1250 625" className="block h-[625px] w-[1250px]">
        <defs>
          <filter id="meander" x="0" y="0" width="1250" height="625" filterUnits="userSpaceOnUse" colorInterpolationFilters="sRGB">
            <feTurbulence type="fractalNoise" baseFrequency="0.1" numOctaves="1" seed="4" result="n" />
            <feDisplacementMap in="SourceGraphic" in2="n" scale="11" xChannelSelector="R" yChannelSelector="G" />
          </filter>
          <filter id="rough" x="0" y="0" width="1250" height="625" filterUnits="userSpaceOnUse" colorInterpolationFilters="sRGB">
            <feTurbulence type="fractalNoise" baseFrequency="0.06" numOctaves="2" seed="9" result="n" />
            <feDisplacementMap in="SourceGraphic" in2="n" scale="7" xChannelSelector="R" yChannelSelector="G" />
          </filter>
          <linearGradient id="pin" x1="0" y1="0" x2="0" y2="1">
            <stop offset="0" stopColor="#4596d2" />
            <stop offset="1" stopColor="#1a70c2" />
          </linearGradient>
          <linearGradient id="shade" x1="0" y1="1" x2="1" y2="0">
            <stop offset="0" stopColor="#000" stopOpacity="0.5" />
            <stop offset="1" stopColor="#000" stopOpacity="0.05" />
          </linearGradient>
          <filter id="soft">
            <feGaussianBlur stdDeviation="2" />
          </filter>
        </defs>
        <g filter="url(#rough)">
          {FILLS.map(([name, color]) => (
            <Layer key={name} name={name} fill={color} />
          ))}
        </g>
        <g filter="url(#meander)">
          {LINES.map(([name, color, width, dash]) => (
            <Layer key={name} name={name} smooth fill="none" stroke={color} strokeWidth={width} strokeDasharray={dash} strokeLinejoin="round" />
          ))}
        </g>
        <g filter="url(#rough)">
          <Layer name="admin" fill="none" stroke="#cbb4cc" strokeWidth="4.4" strokeDasharray="22 5 5 5" />
        </g>
        {ROADS.map(([name, color, width]) => (
          <Layer key={name} name={name} smooth fill="none" stroke={color} strokeWidth={width} strokeLinejoin="round" strokeLinecap="round" />
        ))}
        {[80.5, 400.5, 720.5, 1040.5].map((x) => (
          <path key={x} d={`M${x} 0V625`} stroke="#fff" strokeOpacity="0.8" />
        ))}
        <g fontFamily="'Noto Sans', sans-serif" textAnchor="middle" paintOrder="stroke" strokeLinejoin="round">
          <g fontSize="12.3" fontStyle="italic" fontWeight="500" fill="#a97fac" stroke="#f7f4f3" strokeWidth="3">
            {DISTRICTS.map(([x, y, a, b]) => (
              <text key={a + x} x={x} y={y}>
                <tspan x={x}>{a}</tspan>
                {b && <tspan x={x} dy="15">{b}</tspan>}
              </text>
            ))}
          </g>
          <g fill="#444" fontWeight="500" stroke="#f4f1ec" strokeWidth="2.5">
            {TOWNS.map(([x, y, t, size]) => (
              <text key={t} x={x} y={y} fontSize={size}>{t}</text>
            ))}
          </g>
        </g>
        <g transform="translate(589.500 316.500) rotate(-90)">
          <FaPlane x="0" y="0" width="15" height="15" color="#8764c8" />
        </g>
        <path d="M627 312 634 284Q644 272 652 282Q655 292 646 299Z" fill="url(#shade)" filter="url(#soft)" />
        <g transform="translate(610.5 262.5) scale(1.24)">
          <path d="M12.5.4C5.8.4.4 5.8.4 12.5c0 2.7.8 4.7 1.9 6.900L12.5 40.6l10.2-21.2c1.1-2.2 1.9-4.2 1.9-6.9C24.6 5.8 19.2.4 12.5.4z" fill="url(#pin)" stroke="#2e6c97" strokeWidth="0.8" />
          <circle cx="12.5" cy="12.5" r="4.5" fill="#fff" stroke="#3a7fb5" strokeWidth="0.5" />
        </g>
      </svg>
      <div className="absolute right-0 bottom-0 flex h-[21px] w-[323px] items-center bg-white/80 pl-[7px] text-[14.5px] leading-[21px] whitespace-pre text-[#333]">
        <svg viewBox="0 0 15 10" className="mr-1 h-[10px] w-[15px]">
          <path fill="#4C7BE1" d="M0 0h15v5H0z" />
          <path fill="#FFD500" d="M0 5h15v4H0z" />
          <path fill="#E0BC00" d="M0 9h15v1H0z" />
        </svg>
        <span className="tracking-[0.15px] text-[#0078A8]">Leaflet</span>
        <span className="tracking-[0.1px]"> | © </span>
        <span className="tracking-[0.72px] text-[#0078A8]">OpenStreetMap</span>
        <span className="tracking-[0.66px]"> contributors</span>
      </div>
    </div>
  );
}

function Logo() {
  return (
    <svg viewBox="42 60 186 189" className="block h-[63px] w-[62px]">
      <defs>
        <linearGradient id="sky" x1="0" y1="0" x2="0" y2="1">
          <stop offset="0" stopColor="#20cfe4" />
          <stop offset="1" stopColor="#0095da" />
        </linearGradient>
      </defs>
      <path
        fill="url(#sky)"
        fillRule="evenodd"
        d="M70 249C52 245 42 222 42 192C42 155 58 132 82 130C88 90 108 60 135 60C168 60 190 100 190 150C190 175 185 195 181 212H193C205 208 212 192 212 172C212 150 206 138 198 128C193 122 193 115 194 110C214 118 228 145 228 178C228 215 214 249 190 249ZM75 211C65 208 60 200 60 187C60 168 68 156 82 156C88 156 92 158 95 161C95 120 112 97 134 97C156 97 168 125 168 155C168 185 158 211 136 211Z"
      />
    </svg>
  );
}

function SunPicture({ className }) {
  return (
    <svg viewBox="-40 -40 80 80" className={className}>
      {Array.from({ length: 12 }, (_, i) => (
        <rect key={i} x="-3.2" y="-38.8" width="6.4" height="12" rx="0.8" fill="#ffb514" transform={`rotate(${i * 30})`} />
      ))}
      <circle r="18.8" fill="#fff200" stroke="#ffb300" strokeWidth="6.5" />
    </svg>
  );
}

export default function App() {
  return (
    <div className="w-[1920px] bg-white font-['Inter',sans-serif] text-xl leading-[30px] text-[#212529]">
      <header className="flex h-[117px] items-start justify-between pr-[279px] pl-[254px] text-[#3d4247]">
        <div className="pt-5">
          <Logo />
          <div className="-mt-[3px] tracking-[0.6px]">Weather Forecaster</div>
        </div>
        <nav className="flex gap-[39px] pt-[53px] tracking-[0.9px]">
          <a>Home</a>
          <a>About</a>
          <a>Contact</a>
        </nav>
      </header>

      <main className="h-[1435px] bg-[#87ceeb] pt-[90px] pl-[339px]">
        <div className="flex items-start gap-[17px]">
          <div className="flex h-[61px] w-[1038px] items-center rounded-[5px] border border-[#ced4da] bg-white px-[15px] tracking-[0.65px] text-[#495057]">Indore</div>
          <button className="flex h-[52px] w-[177px] items-center rounded-[5px] bg-[#cff2ff] pl-9 tracking-[0.7px] text-[#0d83ff]">
            <FaMagnifyingGlass className="mr-5 mb-[2px] h-5 w-5 text-[#17a2b8]" />
            <span>Search</span>
          </button>
        </div>

        <div className="mt-[51px] flex gap-[30px]">
          <section className="h-[468px] w-[801px] rounded-[13px] border border-dashed border-[#c5ccd3] bg-[#f0f8ff] px-[60px] pt-[60px]">
            <div className="flex justify-between">
              <span className="tracking-[0.65px]">Indore</span>
              <span className="tracking-[-0.18px] whitespace-nowrap">2025-02-09 14:32</span>
            </div>
            <div className="mt-[33px] flex justify-center text-[35px] leading-[54px] tracking-[-0.6px]">
              <span>30.3</span>
              <span className="-mt-[9px] mr-[5px] text-[26px]">°</span>
              <span>C</span>
            </div>
            <div className="mt-[5px] text-center tracking-[0.65px]">Stormy</div>
            <div className="mt-[50px] flex justify-between">
              <div className="flex flex-col gap-[10px] tracking-[-0.35px]">
                <div className="flex items-center"><FaWind className="mr-[15px] h-5 w-5" />9.4</div>
                <div className="flex items-center"><FaDroplet className="mr-[10px] h-5 w-[15px]" />30.34</div>
                <div className="flex items-center"><FaSun className="mr-[10px] h-5 w-5" />28.4</div>
              </div>
              <SunPicture className="mt-[29px] mr-[39px] h-[108px] w-[108px]" />
            </div>
          </section>

          <section className="h-[468px] w-[401px] rounded-[13px] border border-dashed border-[#c5ccd3] bg-[#f0f8ff] pt-[60px]">
            <div className="flex items-center justify-center font-bold">
              <span className="tracking-[-0.1px]">2025-02-10</span>
              <span className="mr-[11px] mb-px ml-3 h-[19px] w-1 bg-[#17a2b8]" />
              <span className="tracking-[0.8px]">Monday</span>
            </div>
            <SunPicture className="mt-[59px] ml-[149.5px] h-20 w-20" />
            <div className="mt-[50px] ml-[180px] flex flex-col gap-[10px] tracking-[-0.4px]">
              <div className="flex items-center"><FaWind className="h-5 w-5" />18</div>
              <div className="flex items-center"><FaDroplet className="h-5 w-[15px]" />26</div>
              <div className="flex items-center">
                <FaSun className="h-5 w-5" />31.9
                <span className="-mt-[10px] text-[15px]">°</span>C
              </div>
            </div>
            <div className="mt-8 flex justify-between px-[22px] text-[#7a7dff]">
              <FaArrowLeft className="h-5 w-[18px]" />
              <FaArrowRight className="h-5 w-[18px]" />
            </div>
          </section>
        </div>

        <div className="mt-[110px]">
          <MapView />
        </div>
      </main>

      <footer className="flex h-[100px] items-start bg-white pl-[1319px]">
        <button className="mt-8 h-[52px] w-[121px] rounded-[26px] bg-[#17a2b8] font-medium tracking-[0.2px] text-white">Subscribe</button>
        <div className="mt-[25px] ml-[30px] flex gap-5 text-[31px] text-[#27b3dc]">
          <FaInstagram />
          <FaFacebook />
          <FaTwitter />
          <FaWhatsapp />
        </div>
      </footer>
    </div>
  );
}
